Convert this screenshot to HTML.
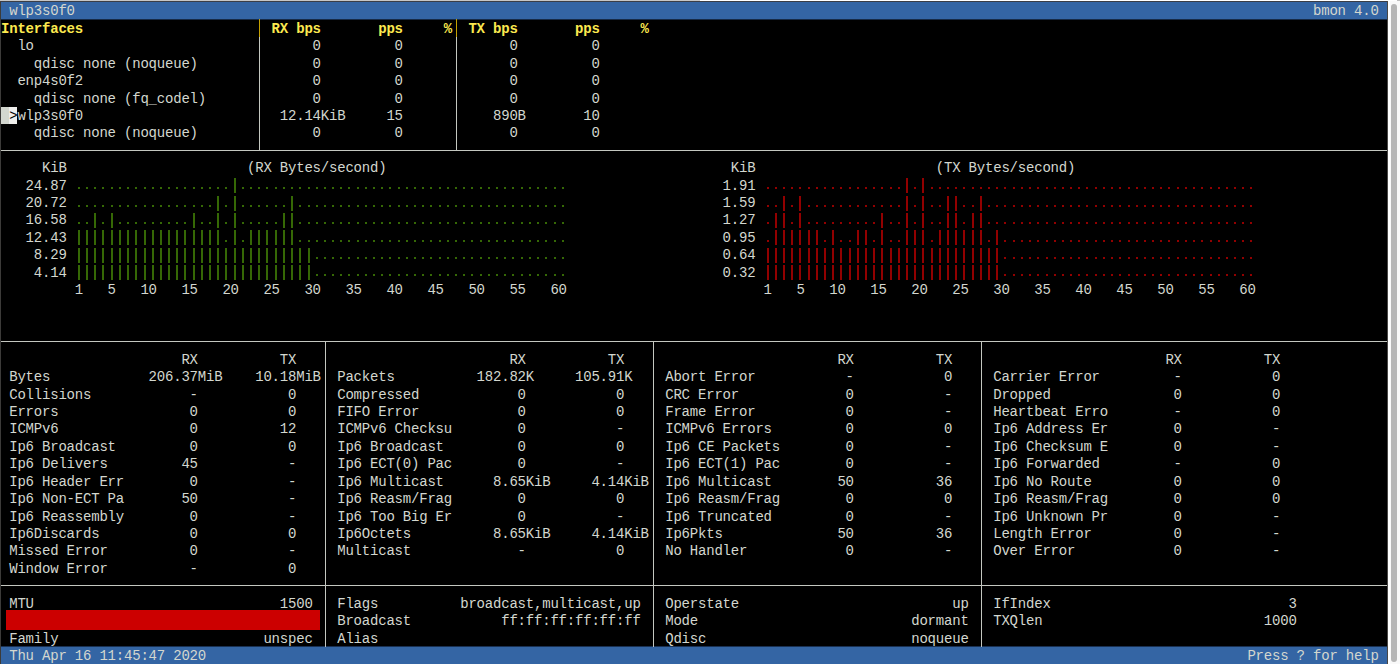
<!DOCTYPE html>
<html><head><meta charset="utf-8"><title>bmon</title>
<style>
html,body{margin:0;padding:0;}
body{width:1400px;height:664px;overflow:hidden;position:relative;background:#f9f9f9;}
#term{position:absolute;left:0;top:1px;width:1388px;height:663px;background:#000;}
#lb{position:absolute;left:0;top:1px;width:1px;height:663px;background:#3c3b39;}
#tb{position:absolute;left:0;top:1px;width:1388px;height:1px;background:#3b3e46;}
#rb{position:absolute;left:1387px;top:1px;width:1px;height:663px;background:#4a4846;}
#t0{position:absolute;left:0;top:0;width:700px;height:1px;background:#c6c6c6;}
#t1{position:absolute;left:700px;top:0;width:700px;height:1px;background:#ffffff;}
#st{position:absolute;left:1388px;top:0;width:2px;height:664px;background:#ffffff;}
#cr{position:absolute;left:1397px;top:0;width:3px;height:1px;background:#bdbdbd;}
#sb{position:absolute;left:1391px;top:4px;width:6px;height:658px;border-radius:3px;background:#b6b6b6;}
span{position:absolute;white-space:pre;font-family:"Liberation Mono",monospace;font-size:14.0px;line-height:17.42px;letter-spacing:-0.201px;color:#d3d7cf;}
i{position:absolute;display:block;}
</style></head><body>
<div id="term"></div><div id="lb"></div><div id="tb"></div><div id="rb"></div><div id="t0"></div><div id="t1"></div><div id="st"></div><div id="sb"></div><div id="cr"></div>
<i style="left:1.00px;top:2.00px;width:1386.00px;height:17.00px;background:#3465a4;"></i>
<i style="left:1.00px;top:19.00px;width:1386.00px;height:1.00px;background:#172b47;"></i>
<i style="left:1.00px;top:647.00px;width:1386.00px;height:17.00px;background:#3465a4;"></i>
<i style="left:1.00px;top:646.00px;width:1386.00px;height:1.00px;background:#1a3152;"></i>
<i style="left:259.00px;top:19.42px;width:1.00px;height:17.42px;background:#c4a000;"></i>
<i style="left:259.00px;top:36.84px;width:1.00px;height:113.23px;background:#c4c7c0;"></i>
<i style="left:456.00px;top:19.42px;width:1.00px;height:17.42px;background:#c4a000;"></i>
<i style="left:456.00px;top:36.84px;width:1.00px;height:113.23px;background:#c4c7c0;"></i>
<i style="left:1.00px;top:106.52px;width:8.20px;height:17.42px;background:#d3d7cf;"></i>
<i style="left:9.20px;top:106.52px;width:8.20px;height:17.42px;background:#eeeeec;"></i>
<i style="left:1.00px;top:150.00px;width:1385.80px;height:1.00px;background:#c4c7c0;"></i>
<i style="left:78.00px;top:187.00px;width:2.00px;height:2.00px;background:#356805;"></i>
<i style="left:86.00px;top:187.00px;width:2.00px;height:2.00px;background:#356805;"></i>
<i style="left:94.00px;top:187.00px;width:2.00px;height:2.00px;background:#356805;"></i>
<i style="left:102.00px;top:187.00px;width:2.00px;height:2.00px;background:#356805;"></i>
<i style="left:111.00px;top:187.00px;width:2.00px;height:2.00px;background:#356805;"></i>
<i style="left:119.00px;top:187.00px;width:2.00px;height:2.00px;background:#356805;"></i>
<i style="left:127.00px;top:187.00px;width:2.00px;height:2.00px;background:#356805;"></i>
<i style="left:135.00px;top:187.00px;width:2.00px;height:2.00px;background:#356805;"></i>
<i style="left:144.00px;top:187.00px;width:2.00px;height:2.00px;background:#356805;"></i>
<i style="left:152.00px;top:187.00px;width:2.00px;height:2.00px;background:#356805;"></i>
<i style="left:160.00px;top:187.00px;width:2.00px;height:2.00px;background:#356805;"></i>
<i style="left:168.00px;top:187.00px;width:2.00px;height:2.00px;background:#356805;"></i>
<i style="left:176.00px;top:187.00px;width:2.00px;height:2.00px;background:#356805;"></i>
<i style="left:184.00px;top:187.00px;width:2.00px;height:2.00px;background:#356805;"></i>
<i style="left:193.00px;top:187.00px;width:2.00px;height:2.00px;background:#356805;"></i>
<i style="left:201.00px;top:187.00px;width:2.00px;height:2.00px;background:#356805;"></i>
<i style="left:209.00px;top:187.00px;width:2.00px;height:2.00px;background:#356805;"></i>
<i style="left:217.00px;top:187.00px;width:2.00px;height:2.00px;background:#356805;"></i>
<i style="left:225.00px;top:187.00px;width:2.00px;height:2.00px;background:#356805;"></i>
<i style="left:234.00px;top:178.00px;width:2.00px;height:15.00px;background:#356805;"></i>
<i style="left:242.00px;top:187.00px;width:2.00px;height:2.00px;background:#356805;"></i>
<i style="left:250.00px;top:187.00px;width:2.00px;height:2.00px;background:#356805;"></i>
<i style="left:258.00px;top:187.00px;width:2.00px;height:2.00px;background:#356805;"></i>
<i style="left:266.00px;top:187.00px;width:2.00px;height:2.00px;background:#356805;"></i>
<i style="left:275.00px;top:187.00px;width:2.00px;height:2.00px;background:#356805;"></i>
<i style="left:283.00px;top:187.00px;width:2.00px;height:2.00px;background:#356805;"></i>
<i style="left:291.00px;top:187.00px;width:2.00px;height:2.00px;background:#356805;"></i>
<i style="left:299.00px;top:187.00px;width:2.00px;height:2.00px;background:#356805;"></i>
<i style="left:308.00px;top:187.00px;width:2.00px;height:2.00px;background:#356805;"></i>
<i style="left:316.00px;top:187.00px;width:2.00px;height:2.00px;background:#356805;"></i>
<i style="left:324.00px;top:187.00px;width:2.00px;height:2.00px;background:#356805;"></i>
<i style="left:332.00px;top:187.00px;width:2.00px;height:2.00px;background:#356805;"></i>
<i style="left:340.00px;top:187.00px;width:2.00px;height:2.00px;background:#356805;"></i>
<i style="left:348.00px;top:187.00px;width:2.00px;height:2.00px;background:#356805;"></i>
<i style="left:357.00px;top:187.00px;width:2.00px;height:2.00px;background:#356805;"></i>
<i style="left:365.00px;top:187.00px;width:2.00px;height:2.00px;background:#356805;"></i>
<i style="left:373.00px;top:187.00px;width:2.00px;height:2.00px;background:#356805;"></i>
<i style="left:381.00px;top:187.00px;width:2.00px;height:2.00px;background:#356805;"></i>
<i style="left:389.00px;top:187.00px;width:2.00px;height:2.00px;background:#356805;"></i>
<i style="left:398.00px;top:187.00px;width:2.00px;height:2.00px;background:#356805;"></i>
<i style="left:406.00px;top:187.00px;width:2.00px;height:2.00px;background:#356805;"></i>
<i style="left:414.00px;top:187.00px;width:2.00px;height:2.00px;background:#356805;"></i>
<i style="left:422.00px;top:187.00px;width:2.00px;height:2.00px;background:#356805;"></i>
<i style="left:430.00px;top:187.00px;width:2.00px;height:2.00px;background:#356805;"></i>
<i style="left:439.00px;top:187.00px;width:2.00px;height:2.00px;background:#356805;"></i>
<i style="left:447.00px;top:187.00px;width:2.00px;height:2.00px;background:#356805;"></i>
<i style="left:455.00px;top:187.00px;width:2.00px;height:2.00px;background:#356805;"></i>
<i style="left:463.00px;top:187.00px;width:2.00px;height:2.00px;background:#356805;"></i>
<i style="left:471.00px;top:187.00px;width:2.00px;height:2.00px;background:#356805;"></i>
<i style="left:480.00px;top:187.00px;width:2.00px;height:2.00px;background:#356805;"></i>
<i style="left:488.00px;top:187.00px;width:2.00px;height:2.00px;background:#356805;"></i>
<i style="left:496.00px;top:187.00px;width:2.00px;height:2.00px;background:#356805;"></i>
<i style="left:504.00px;top:187.00px;width:2.00px;height:2.00px;background:#356805;"></i>
<i style="left:512.00px;top:187.00px;width:2.00px;height:2.00px;background:#356805;"></i>
<i style="left:521.00px;top:187.00px;width:2.00px;height:2.00px;background:#356805;"></i>
<i style="left:529.00px;top:187.00px;width:2.00px;height:2.00px;background:#356805;"></i>
<i style="left:537.00px;top:187.00px;width:2.00px;height:2.00px;background:#356805;"></i>
<i style="left:545.00px;top:187.00px;width:2.00px;height:2.00px;background:#356805;"></i>
<i style="left:554.00px;top:187.00px;width:2.00px;height:2.00px;background:#356805;"></i>
<i style="left:562.00px;top:187.00px;width:2.00px;height:2.00px;background:#356805;"></i>
<i style="left:78.00px;top:205.00px;width:2.00px;height:2.00px;background:#356805;"></i>
<i style="left:86.00px;top:205.00px;width:2.00px;height:2.00px;background:#356805;"></i>
<i style="left:94.00px;top:205.00px;width:2.00px;height:2.00px;background:#356805;"></i>
<i style="left:102.00px;top:205.00px;width:2.00px;height:2.00px;background:#356805;"></i>
<i style="left:111.00px;top:205.00px;width:2.00px;height:2.00px;background:#356805;"></i>
<i style="left:119.00px;top:205.00px;width:2.00px;height:2.00px;background:#356805;"></i>
<i style="left:127.00px;top:205.00px;width:2.00px;height:2.00px;background:#356805;"></i>
<i style="left:135.00px;top:205.00px;width:2.00px;height:2.00px;background:#356805;"></i>
<i style="left:144.00px;top:205.00px;width:2.00px;height:2.00px;background:#356805;"></i>
<i style="left:152.00px;top:205.00px;width:2.00px;height:2.00px;background:#356805;"></i>
<i style="left:160.00px;top:205.00px;width:2.00px;height:2.00px;background:#356805;"></i>
<i style="left:168.00px;top:205.00px;width:2.00px;height:2.00px;background:#356805;"></i>
<i style="left:176.00px;top:205.00px;width:2.00px;height:2.00px;background:#356805;"></i>
<i style="left:184.00px;top:205.00px;width:2.00px;height:2.00px;background:#356805;"></i>
<i style="left:193.00px;top:205.00px;width:2.00px;height:2.00px;background:#356805;"></i>
<i style="left:201.00px;top:205.00px;width:2.00px;height:2.00px;background:#356805;"></i>
<i style="left:209.00px;top:205.00px;width:2.00px;height:2.00px;background:#356805;"></i>
<i style="left:217.00px;top:196.00px;width:2.00px;height:15.00px;background:#356805;"></i>
<i style="left:225.00px;top:205.00px;width:2.00px;height:2.00px;background:#356805;"></i>
<i style="left:234.00px;top:196.00px;width:2.00px;height:15.00px;background:#356805;"></i>
<i style="left:242.00px;top:205.00px;width:2.00px;height:2.00px;background:#356805;"></i>
<i style="left:250.00px;top:205.00px;width:2.00px;height:2.00px;background:#356805;"></i>
<i style="left:258.00px;top:205.00px;width:2.00px;height:2.00px;background:#356805;"></i>
<i style="left:266.00px;top:205.00px;width:2.00px;height:2.00px;background:#356805;"></i>
<i style="left:275.00px;top:205.00px;width:2.00px;height:2.00px;background:#356805;"></i>
<i style="left:283.00px;top:205.00px;width:2.00px;height:2.00px;background:#356805;"></i>
<i style="left:291.00px;top:196.00px;width:2.00px;height:15.00px;background:#356805;"></i>
<i style="left:299.00px;top:205.00px;width:2.00px;height:2.00px;background:#356805;"></i>
<i style="left:308.00px;top:205.00px;width:2.00px;height:2.00px;background:#356805;"></i>
<i style="left:316.00px;top:205.00px;width:2.00px;height:2.00px;background:#356805;"></i>
<i style="left:324.00px;top:205.00px;width:2.00px;height:2.00px;background:#356805;"></i>
<i style="left:332.00px;top:205.00px;width:2.00px;height:2.00px;background:#356805;"></i>
<i style="left:340.00px;top:205.00px;width:2.00px;height:2.00px;background:#356805;"></i>
<i style="left:348.00px;top:205.00px;width:2.00px;height:2.00px;background:#356805;"></i>
<i style="left:357.00px;top:205.00px;width:2.00px;height:2.00px;background:#356805;"></i>
<i style="left:365.00px;top:205.00px;width:2.00px;height:2.00px;background:#356805;"></i>
<i style="left:373.00px;top:205.00px;width:2.00px;height:2.00px;background:#356805;"></i>
<i style="left:381.00px;top:205.00px;width:2.00px;height:2.00px;background:#356805;"></i>
<i style="left:389.00px;top:205.00px;width:2.00px;height:2.00px;background:#356805;"></i>
<i style="left:398.00px;top:205.00px;width:2.00px;height:2.00px;background:#356805;"></i>
<i style="left:406.00px;top:205.00px;width:2.00px;height:2.00px;background:#356805;"></i>
<i style="left:414.00px;top:205.00px;width:2.00px;height:2.00px;background:#356805;"></i>
<i style="left:422.00px;top:205.00px;width:2.00px;height:2.00px;background:#356805;"></i>
<i style="left:430.00px;top:205.00px;width:2.00px;height:2.00px;background:#356805;"></i>
<i style="left:439.00px;top:205.00px;width:2.00px;height:2.00px;background:#356805;"></i>
<i style="left:447.00px;top:205.00px;width:2.00px;height:2.00px;background:#356805;"></i>
<i style="left:455.00px;top:205.00px;width:2.00px;height:2.00px;background:#356805;"></i>
<i style="left:463.00px;top:205.00px;width:2.00px;height:2.00px;background:#356805;"></i>
<i style="left:471.00px;top:205.00px;width:2.00px;height:2.00px;background:#356805;"></i>
<i style="left:480.00px;top:205.00px;width:2.00px;height:2.00px;background:#356805;"></i>
<i style="left:488.00px;top:205.00px;width:2.00px;height:2.00px;background:#356805;"></i>
<i style="left:496.00px;top:205.00px;width:2.00px;height:2.00px;background:#356805;"></i>
<i style="left:504.00px;top:205.00px;width:2.00px;height:2.00px;background:#356805;"></i>
<i style="left:512.00px;top:205.00px;width:2.00px;height:2.00px;background:#356805;"></i>
<i style="left:521.00px;top:205.00px;width:2.00px;height:2.00px;background:#356805;"></i>
<i style="left:529.00px;top:205.00px;width:2.00px;height:2.00px;background:#356805;"></i>
<i style="left:537.00px;top:205.00px;width:2.00px;height:2.00px;background:#356805;"></i>
<i style="left:545.00px;top:205.00px;width:2.00px;height:2.00px;background:#356805;"></i>
<i style="left:554.00px;top:205.00px;width:2.00px;height:2.00px;background:#356805;"></i>
<i style="left:562.00px;top:205.00px;width:2.00px;height:2.00px;background:#356805;"></i>
<i style="left:78.00px;top:222.00px;width:2.00px;height:2.00px;background:#356805;"></i>
<i style="left:86.00px;top:222.00px;width:2.00px;height:2.00px;background:#356805;"></i>
<i style="left:94.00px;top:213.00px;width:2.00px;height:15.00px;background:#356805;"></i>
<i style="left:102.00px;top:222.00px;width:2.00px;height:2.00px;background:#356805;"></i>
<i style="left:111.00px;top:213.00px;width:2.00px;height:15.00px;background:#356805;"></i>
<i style="left:119.00px;top:222.00px;width:2.00px;height:2.00px;background:#356805;"></i>
<i style="left:127.00px;top:222.00px;width:2.00px;height:2.00px;background:#356805;"></i>
<i style="left:135.00px;top:222.00px;width:2.00px;height:2.00px;background:#356805;"></i>
<i style="left:144.00px;top:222.00px;width:2.00px;height:2.00px;background:#356805;"></i>
<i style="left:152.00px;top:222.00px;width:2.00px;height:2.00px;background:#356805;"></i>
<i style="left:160.00px;top:222.00px;width:2.00px;height:2.00px;background:#356805;"></i>
<i style="left:168.00px;top:222.00px;width:2.00px;height:2.00px;background:#356805;"></i>
<i style="left:176.00px;top:222.00px;width:2.00px;height:2.00px;background:#356805;"></i>
<i style="left:184.00px;top:222.00px;width:2.00px;height:2.00px;background:#356805;"></i>
<i style="left:193.00px;top:213.00px;width:2.00px;height:15.00px;background:#356805;"></i>
<i style="left:201.00px;top:222.00px;width:2.00px;height:2.00px;background:#356805;"></i>
<i style="left:209.00px;top:222.00px;width:2.00px;height:2.00px;background:#356805;"></i>
<i style="left:217.00px;top:213.00px;width:2.00px;height:15.00px;background:#356805;"></i>
<i style="left:225.00px;top:222.00px;width:2.00px;height:2.00px;background:#356805;"></i>
<i style="left:234.00px;top:213.00px;width:2.00px;height:15.00px;background:#356805;"></i>
<i style="left:242.00px;top:222.00px;width:2.00px;height:2.00px;background:#356805;"></i>
<i style="left:250.00px;top:222.00px;width:2.00px;height:2.00px;background:#356805;"></i>
<i style="left:258.00px;top:222.00px;width:2.00px;height:2.00px;background:#356805;"></i>
<i style="left:266.00px;top:222.00px;width:2.00px;height:2.00px;background:#356805;"></i>
<i style="left:275.00px;top:222.00px;width:2.00px;height:2.00px;background:#356805;"></i>
<i style="left:283.00px;top:213.00px;width:2.00px;height:15.00px;background:#356805;"></i>
<i style="left:291.00px;top:213.00px;width:2.00px;height:15.00px;background:#356805;"></i>
<i style="left:299.00px;top:222.00px;width:2.00px;height:2.00px;background:#356805;"></i>
<i style="left:308.00px;top:222.00px;width:2.00px;height:2.00px;background:#356805;"></i>
<i style="left:316.00px;top:222.00px;width:2.00px;height:2.00px;background:#356805;"></i>
<i style="left:324.00px;top:222.00px;width:2.00px;height:2.00px;background:#356805;"></i>
<i style="left:332.00px;top:222.00px;width:2.00px;height:2.00px;background:#356805;"></i>
<i style="left:340.00px;top:222.00px;width:2.00px;height:2.00px;background:#356805;"></i>
<i style="left:348.00px;top:222.00px;width:2.00px;height:2.00px;background:#356805;"></i>
<i style="left:357.00px;top:222.00px;width:2.00px;height:2.00px;background:#356805;"></i>
<i style="left:365.00px;top:222.00px;width:2.00px;height:2.00px;background:#356805;"></i>
<i style="left:373.00px;top:222.00px;width:2.00px;height:2.00px;background:#356805;"></i>
<i style="left:381.00px;top:222.00px;width:2.00px;height:2.00px;background:#356805;"></i>
<i style="left:389.00px;top:222.00px;width:2.00px;height:2.00px;background:#356805;"></i>
<i style="left:398.00px;top:222.00px;width:2.00px;height:2.00px;background:#356805;"></i>
<i style="left:406.00px;top:222.00px;width:2.00px;height:2.00px;background:#356805;"></i>
<i style="left:414.00px;top:222.00px;width:2.00px;height:2.00px;background:#356805;"></i>
<i style="left:422.00px;top:222.00px;width:2.00px;height:2.00px;background:#356805;"></i>
<i style="left:430.00px;top:222.00px;width:2.00px;height:2.00px;background:#356805;"></i>
<i style="left:439.00px;top:222.00px;width:2.00px;height:2.00px;background:#356805;"></i>
<i style="left:447.00px;top:222.00px;width:2.00px;height:2.00px;background:#356805;"></i>
<i style="left:455.00px;top:222.00px;width:2.00px;height:2.00px;background:#356805;"></i>
<i style="left:463.00px;top:222.00px;width:2.00px;height:2.00px;background:#356805;"></i>
<i style="left:471.00px;top:222.00px;width:2.00px;height:2.00px;background:#356805;"></i>
<i style="left:480.00px;top:222.00px;width:2.00px;height:2.00px;background:#356805;"></i>
<i style="left:488.00px;top:222.00px;width:2.00px;height:2.00px;background:#356805;"></i>
<i style="left:496.00px;top:222.00px;width:2.00px;height:2.00px;background:#356805;"></i>
<i style="left:504.00px;top:222.00px;width:2.00px;height:2.00px;background:#356805;"></i>
<i style="left:512.00px;top:222.00px;width:2.00px;height:2.00px;background:#356805;"></i>
<i style="left:521.00px;top:222.00px;width:2.00px;height:2.00px;background:#356805;"></i>
<i style="left:529.00px;top:222.00px;width:2.00px;height:2.00px;background:#356805;"></i>
<i style="left:537.00px;top:222.00px;width:2.00px;height:2.00px;background:#356805;"></i>
<i style="left:545.00px;top:222.00px;width:2.00px;height:2.00px;background:#356805;"></i>
<i style="left:554.00px;top:222.00px;width:2.00px;height:2.00px;background:#356805;"></i>
<i style="left:562.00px;top:222.00px;width:2.00px;height:2.00px;background:#356805;"></i>
<i style="left:78.00px;top:230.00px;width:2.00px;height:15.00px;background:#356805;"></i>
<i style="left:86.00px;top:230.00px;width:2.00px;height:15.00px;background:#356805;"></i>
<i style="left:94.00px;top:230.00px;width:2.00px;height:15.00px;background:#356805;"></i>
<i style="left:102.00px;top:230.00px;width:2.00px;height:15.00px;background:#356805;"></i>
<i style="left:111.00px;top:230.00px;width:2.00px;height:15.00px;background:#356805;"></i>
<i style="left:119.00px;top:230.00px;width:2.00px;height:15.00px;background:#356805;"></i>
<i style="left:127.00px;top:230.00px;width:2.00px;height:15.00px;background:#356805;"></i>
<i style="left:135.00px;top:230.00px;width:2.00px;height:15.00px;background:#356805;"></i>
<i style="left:144.00px;top:230.00px;width:2.00px;height:15.00px;background:#356805;"></i>
<i style="left:152.00px;top:230.00px;width:2.00px;height:15.00px;background:#356805;"></i>
<i style="left:160.00px;top:230.00px;width:2.00px;height:15.00px;background:#356805;"></i>
<i style="left:168.00px;top:230.00px;width:2.00px;height:15.00px;background:#356805;"></i>
<i style="left:176.00px;top:230.00px;width:2.00px;height:15.00px;background:#356805;"></i>
<i style="left:184.00px;top:230.00px;width:2.00px;height:15.00px;background:#356805;"></i>
<i style="left:193.00px;top:230.00px;width:2.00px;height:15.00px;background:#356805;"></i>
<i style="left:201.00px;top:230.00px;width:2.00px;height:15.00px;background:#356805;"></i>
<i style="left:209.00px;top:230.00px;width:2.00px;height:15.00px;background:#356805;"></i>
<i style="left:217.00px;top:230.00px;width:2.00px;height:15.00px;background:#356805;"></i>
<i style="left:225.00px;top:240.00px;width:2.00px;height:2.00px;background:#356805;"></i>
<i style="left:234.00px;top:230.00px;width:2.00px;height:15.00px;background:#356805;"></i>
<i style="left:242.00px;top:240.00px;width:2.00px;height:2.00px;background:#356805;"></i>
<i style="left:250.00px;top:230.00px;width:2.00px;height:15.00px;background:#356805;"></i>
<i style="left:258.00px;top:230.00px;width:2.00px;height:15.00px;background:#356805;"></i>
<i style="left:266.00px;top:230.00px;width:2.00px;height:15.00px;background:#356805;"></i>
<i style="left:275.00px;top:230.00px;width:2.00px;height:15.00px;background:#356805;"></i>
<i style="left:283.00px;top:230.00px;width:2.00px;height:15.00px;background:#356805;"></i>
<i style="left:291.00px;top:230.00px;width:2.00px;height:15.00px;background:#356805;"></i>
<i style="left:299.00px;top:240.00px;width:2.00px;height:2.00px;background:#356805;"></i>
<i style="left:308.00px;top:240.00px;width:2.00px;height:2.00px;background:#356805;"></i>
<i style="left:316.00px;top:240.00px;width:2.00px;height:2.00px;background:#356805;"></i>
<i style="left:324.00px;top:240.00px;width:2.00px;height:2.00px;background:#356805;"></i>
<i style="left:332.00px;top:240.00px;width:2.00px;height:2.00px;background:#356805;"></i>
<i style="left:340.00px;top:240.00px;width:2.00px;height:2.00px;background:#356805;"></i>
<i style="left:348.00px;top:240.00px;width:2.00px;height:2.00px;background:#356805;"></i>
<i style="left:357.00px;top:240.00px;width:2.00px;height:2.00px;background:#356805;"></i>
<i style="left:365.00px;top:240.00px;width:2.00px;height:2.00px;background:#356805;"></i>
<i style="left:373.00px;top:240.00px;width:2.00px;height:2.00px;background:#356805;"></i>
<i style="left:381.00px;top:240.00px;width:2.00px;height:2.00px;background:#356805;"></i>
<i style="left:389.00px;top:240.00px;width:2.00px;height:2.00px;background:#356805;"></i>
<i style="left:398.00px;top:240.00px;width:2.00px;height:2.00px;background:#356805;"></i>
<i style="left:406.00px;top:240.00px;width:2.00px;height:2.00px;background:#356805;"></i>
<i style="left:414.00px;top:240.00px;width:2.00px;height:2.00px;background:#356805;"></i>
<i style="left:422.00px;top:240.00px;width:2.00px;height:2.00px;background:#356805;"></i>
<i style="left:430.00px;top:240.00px;width:2.00px;height:2.00px;background:#356805;"></i>
<i style="left:439.00px;top:240.00px;width:2.00px;height:2.00px;background:#356805;"></i>
<i style="left:447.00px;top:240.00px;width:2.00px;height:2.00px;background:#356805;"></i>
<i style="left:455.00px;top:240.00px;width:2.00px;height:2.00px;background:#356805;"></i>
<i style="left:463.00px;top:240.00px;width:2.00px;height:2.00px;background:#356805;"></i>
<i style="left:471.00px;top:240.00px;width:2.00px;height:2.00px;background:#356805;"></i>
<i style="left:480.00px;top:240.00px;width:2.00px;height:2.00px;background:#356805;"></i>
<i style="left:488.00px;top:240.00px;width:2.00px;height:2.00px;background:#356805;"></i>
<i style="left:496.00px;top:240.00px;width:2.00px;height:2.00px;background:#356805;"></i>
<i style="left:504.00px;top:240.00px;width:2.00px;height:2.00px;background:#356805;"></i>
<i style="left:512.00px;top:240.00px;width:2.00px;height:2.00px;background:#356805;"></i>
<i style="left:521.00px;top:240.00px;width:2.00px;height:2.00px;background:#356805;"></i>
<i style="left:529.00px;top:240.00px;width:2.00px;height:2.00px;background:#356805;"></i>
<i style="left:537.00px;top:240.00px;width:2.00px;height:2.00px;background:#356805;"></i>
<i style="left:545.00px;top:240.00px;width:2.00px;height:2.00px;background:#356805;"></i>
<i style="left:554.00px;top:240.00px;width:2.00px;height:2.00px;background:#356805;"></i>
<i style="left:562.00px;top:240.00px;width:2.00px;height:2.00px;background:#356805;"></i>
<i style="left:78.00px;top:248.00px;width:2.00px;height:15.00px;background:#356805;"></i>
<i style="left:86.00px;top:248.00px;width:2.00px;height:15.00px;background:#356805;"></i>
<i style="left:94.00px;top:248.00px;width:2.00px;height:15.00px;background:#356805;"></i>
<i style="left:102.00px;top:248.00px;width:2.00px;height:15.00px;background:#356805;"></i>
<i style="left:111.00px;top:248.00px;width:2.00px;height:15.00px;background:#356805;"></i>
<i style="left:119.00px;top:248.00px;width:2.00px;height:15.00px;background:#356805;"></i>
<i style="left:127.00px;top:248.00px;width:2.00px;height:15.00px;background:#356805;"></i>
<i style="left:135.00px;top:248.00px;width:2.00px;height:15.00px;background:#356805;"></i>
<i style="left:144.00px;top:248.00px;width:2.00px;height:15.00px;background:#356805;"></i>
<i style="left:152.00px;top:248.00px;width:2.00px;height:15.00px;background:#356805;"></i>
<i style="left:160.00px;top:248.00px;width:2.00px;height:15.00px;background:#356805;"></i>
<i style="left:168.00px;top:248.00px;width:2.00px;height:15.00px;background:#356805;"></i>
<i style="left:176.00px;top:248.00px;width:2.00px;height:15.00px;background:#356805;"></i>
<i style="left:184.00px;top:248.00px;width:2.00px;height:15.00px;background:#356805;"></i>
<i style="left:193.00px;top:248.00px;width:2.00px;height:15.00px;background:#356805;"></i>
<i style="left:201.00px;top:248.00px;width:2.00px;height:15.00px;background:#356805;"></i>
<i style="left:209.00px;top:248.00px;width:2.00px;height:15.00px;background:#356805;"></i>
<i style="left:217.00px;top:248.00px;width:2.00px;height:15.00px;background:#356805;"></i>
<i style="left:225.00px;top:248.00px;width:2.00px;height:15.00px;background:#356805;"></i>
<i style="left:234.00px;top:248.00px;width:2.00px;height:15.00px;background:#356805;"></i>
<i style="left:242.00px;top:248.00px;width:2.00px;height:15.00px;background:#356805;"></i>
<i style="left:250.00px;top:248.00px;width:2.00px;height:15.00px;background:#356805;"></i>
<i style="left:258.00px;top:248.00px;width:2.00px;height:15.00px;background:#356805;"></i>
<i style="left:266.00px;top:248.00px;width:2.00px;height:15.00px;background:#356805;"></i>
<i style="left:275.00px;top:248.00px;width:2.00px;height:15.00px;background:#356805;"></i>
<i style="left:283.00px;top:248.00px;width:2.00px;height:15.00px;background:#356805;"></i>
<i style="left:291.00px;top:248.00px;width:2.00px;height:15.00px;background:#356805;"></i>
<i style="left:299.00px;top:248.00px;width:2.00px;height:15.00px;background:#356805;"></i>
<i style="left:308.00px;top:248.00px;width:2.00px;height:15.00px;background:#356805;"></i>
<i style="left:316.00px;top:257.00px;width:2.00px;height:2.00px;background:#356805;"></i>
<i style="left:324.00px;top:257.00px;width:2.00px;height:2.00px;background:#356805;"></i>
<i style="left:332.00px;top:257.00px;width:2.00px;height:2.00px;background:#356805;"></i>
<i style="left:340.00px;top:257.00px;width:2.00px;height:2.00px;background:#356805;"></i>
<i style="left:348.00px;top:257.00px;width:2.00px;height:2.00px;background:#356805;"></i>
<i style="left:357.00px;top:257.00px;width:2.00px;height:2.00px;background:#356805;"></i>
<i style="left:365.00px;top:257.00px;width:2.00px;height:2.00px;background:#356805;"></i>
<i style="left:373.00px;top:257.00px;width:2.00px;height:2.00px;background:#356805;"></i>
<i style="left:381.00px;top:257.00px;width:2.00px;height:2.00px;background:#356805;"></i>
<i style="left:389.00px;top:257.00px;width:2.00px;height:2.00px;background:#356805;"></i>
<i style="left:398.00px;top:257.00px;width:2.00px;height:2.00px;background:#356805;"></i>
<i style="left:406.00px;top:257.00px;width:2.00px;height:2.00px;background:#356805;"></i>
<i style="left:414.00px;top:257.00px;width:2.00px;height:2.00px;background:#356805;"></i>
<i style="left:422.00px;top:257.00px;width:2.00px;height:2.00px;background:#356805;"></i>
<i style="left:430.00px;top:257.00px;width:2.00px;height:2.00px;background:#356805;"></i>
<i style="left:439.00px;top:257.00px;width:2.00px;height:2.00px;background:#356805;"></i>
<i style="left:447.00px;top:257.00px;width:2.00px;height:2.00px;background:#356805;"></i>
<i style="left:455.00px;top:257.00px;width:2.00px;height:2.00px;background:#356805;"></i>
<i style="left:463.00px;top:257.00px;width:2.00px;height:2.00px;background:#356805;"></i>
<i style="left:471.00px;top:257.00px;width:2.00px;height:2.00px;background:#356805;"></i>
<i style="left:480.00px;top:257.00px;width:2.00px;height:2.00px;background:#356805;"></i>
<i style="left:488.00px;top:257.00px;width:2.00px;height:2.00px;background:#356805;"></i>
<i style="left:496.00px;top:257.00px;width:2.00px;height:2.00px;background:#356805;"></i>
<i style="left:504.00px;top:257.00px;width:2.00px;height:2.00px;background:#356805;"></i>
<i style="left:512.00px;top:257.00px;width:2.00px;height:2.00px;background:#356805;"></i>
<i style="left:521.00px;top:257.00px;width:2.00px;height:2.00px;background:#356805;"></i>
<i style="left:529.00px;top:257.00px;width:2.00px;height:2.00px;background:#356805;"></i>
<i style="left:537.00px;top:257.00px;width:2.00px;height:2.00px;background:#356805;"></i>
<i style="left:545.00px;top:257.00px;width:2.00px;height:2.00px;background:#356805;"></i>
<i style="left:554.00px;top:257.00px;width:2.00px;height:2.00px;background:#356805;"></i>
<i style="left:562.00px;top:257.00px;width:2.00px;height:2.00px;background:#356805;"></i>
<i style="left:78.00px;top:265.00px;width:2.00px;height:15.00px;background:#356805;"></i>
<i style="left:86.00px;top:265.00px;width:2.00px;height:15.00px;background:#356805;"></i>
<i style="left:94.00px;top:265.00px;width:2.00px;height:15.00px;background:#356805;"></i>
<i style="left:102.00px;top:265.00px;width:2.00px;height:15.00px;background:#356805;"></i>
<i style="left:111.00px;top:265.00px;width:2.00px;height:15.00px;background:#356805;"></i>
<i style="left:119.00px;top:265.00px;width:2.00px;height:15.00px;background:#356805;"></i>
<i style="left:127.00px;top:265.00px;width:2.00px;height:15.00px;background:#356805;"></i>
<i style="left:135.00px;top:265.00px;width:2.00px;height:15.00px;background:#356805;"></i>
<i style="left:144.00px;top:265.00px;width:2.00px;height:15.00px;background:#356805;"></i>
<i style="left:152.00px;top:265.00px;width:2.00px;height:15.00px;background:#356805;"></i>
<i style="left:160.00px;top:265.00px;width:2.00px;height:15.00px;background:#356805;"></i>
<i style="left:168.00px;top:265.00px;width:2.00px;height:15.00px;background:#356805;"></i>
<i style="left:176.00px;top:265.00px;width:2.00px;height:15.00px;background:#356805;"></i>
<i style="left:184.00px;top:265.00px;width:2.00px;height:15.00px;background:#356805;"></i>
<i style="left:193.00px;top:265.00px;width:2.00px;height:15.00px;background:#356805;"></i>
<i style="left:201.00px;top:265.00px;width:2.00px;height:15.00px;background:#356805;"></i>
<i style="left:209.00px;top:265.00px;width:2.00px;height:15.00px;background:#356805;"></i>
<i style="left:217.00px;top:265.00px;width:2.00px;height:15.00px;background:#356805;"></i>
<i style="left:225.00px;top:265.00px;width:2.00px;height:15.00px;background:#356805;"></i>
<i style="left:234.00px;top:265.00px;width:2.00px;height:15.00px;background:#356805;"></i>
<i style="left:242.00px;top:265.00px;width:2.00px;height:15.00px;background:#356805;"></i>
<i style="left:250.00px;top:265.00px;width:2.00px;height:15.00px;background:#356805;"></i>
<i style="left:258.00px;top:265.00px;width:2.00px;height:15.00px;background:#356805;"></i>
<i style="left:266.00px;top:265.00px;width:2.00px;height:15.00px;background:#356805;"></i>
<i style="left:275.00px;top:265.00px;width:2.00px;height:15.00px;background:#356805;"></i>
<i style="left:283.00px;top:265.00px;width:2.00px;height:15.00px;background:#356805;"></i>
<i style="left:291.00px;top:265.00px;width:2.00px;height:15.00px;background:#356805;"></i>
<i style="left:299.00px;top:265.00px;width:2.00px;height:15.00px;background:#356805;"></i>
<i style="left:308.00px;top:265.00px;width:2.00px;height:15.00px;background:#356805;"></i>
<i style="left:316.00px;top:274.00px;width:2.00px;height:2.00px;background:#356805;"></i>
<i style="left:324.00px;top:274.00px;width:2.00px;height:2.00px;background:#356805;"></i>
<i style="left:332.00px;top:274.00px;width:2.00px;height:2.00px;background:#356805;"></i>
<i style="left:340.00px;top:274.00px;width:2.00px;height:2.00px;background:#356805;"></i>
<i style="left:348.00px;top:274.00px;width:2.00px;height:2.00px;background:#356805;"></i>
<i style="left:357.00px;top:274.00px;width:2.00px;height:2.00px;background:#356805;"></i>
<i style="left:365.00px;top:274.00px;width:2.00px;height:2.00px;background:#356805;"></i>
<i style="left:373.00px;top:274.00px;width:2.00px;height:2.00px;background:#356805;"></i>
<i style="left:381.00px;top:274.00px;width:2.00px;height:2.00px;background:#356805;"></i>
<i style="left:389.00px;top:274.00px;width:2.00px;height:2.00px;background:#356805;"></i>
<i style="left:398.00px;top:274.00px;width:2.00px;height:2.00px;background:#356805;"></i>
<i style="left:406.00px;top:274.00px;width:2.00px;height:2.00px;background:#356805;"></i>
<i style="left:414.00px;top:274.00px;width:2.00px;height:2.00px;background:#356805;"></i>
<i style="left:422.00px;top:274.00px;width:2.00px;height:2.00px;background:#356805;"></i>
<i style="left:430.00px;top:274.00px;width:2.00px;height:2.00px;background:#356805;"></i>
<i style="left:439.00px;top:274.00px;width:2.00px;height:2.00px;background:#356805;"></i>
<i style="left:447.00px;top:274.00px;width:2.00px;height:2.00px;background:#356805;"></i>
<i style="left:455.00px;top:274.00px;width:2.00px;height:2.00px;background:#356805;"></i>
<i style="left:463.00px;top:274.00px;width:2.00px;height:2.00px;background:#356805;"></i>
<i style="left:471.00px;top:274.00px;width:2.00px;height:2.00px;background:#356805;"></i>
<i style="left:480.00px;top:274.00px;width:2.00px;height:2.00px;background:#356805;"></i>
<i style="left:488.00px;top:274.00px;width:2.00px;height:2.00px;background:#356805;"></i>
<i style="left:496.00px;top:274.00px;width:2.00px;height:2.00px;background:#356805;"></i>
<i style="left:504.00px;top:274.00px;width:2.00px;height:2.00px;background:#356805;"></i>
<i style="left:512.00px;top:274.00px;width:2.00px;height:2.00px;background:#356805;"></i>
<i style="left:521.00px;top:274.00px;width:2.00px;height:2.00px;background:#356805;"></i>
<i style="left:529.00px;top:274.00px;width:2.00px;height:2.00px;background:#356805;"></i>
<i style="left:537.00px;top:274.00px;width:2.00px;height:2.00px;background:#356805;"></i>
<i style="left:545.00px;top:274.00px;width:2.00px;height:2.00px;background:#356805;"></i>
<i style="left:554.00px;top:274.00px;width:2.00px;height:2.00px;background:#356805;"></i>
<i style="left:562.00px;top:274.00px;width:2.00px;height:2.00px;background:#356805;"></i>
<i style="left:767.00px;top:187.00px;width:2.00px;height:2.00px;background:#920000;"></i>
<i style="left:775.00px;top:187.00px;width:2.00px;height:2.00px;background:#920000;"></i>
<i style="left:783.00px;top:187.00px;width:2.00px;height:2.00px;background:#920000;"></i>
<i style="left:791.00px;top:187.00px;width:2.00px;height:2.00px;background:#920000;"></i>
<i style="left:799.00px;top:187.00px;width:2.00px;height:2.00px;background:#920000;"></i>
<i style="left:808.00px;top:187.00px;width:2.00px;height:2.00px;background:#920000;"></i>
<i style="left:816.00px;top:187.00px;width:2.00px;height:2.00px;background:#920000;"></i>
<i style="left:824.00px;top:187.00px;width:2.00px;height:2.00px;background:#920000;"></i>
<i style="left:832.00px;top:187.00px;width:2.00px;height:2.00px;background:#920000;"></i>
<i style="left:840.00px;top:187.00px;width:2.00px;height:2.00px;background:#920000;"></i>
<i style="left:849.00px;top:187.00px;width:2.00px;height:2.00px;background:#920000;"></i>
<i style="left:857.00px;top:187.00px;width:2.00px;height:2.00px;background:#920000;"></i>
<i style="left:865.00px;top:187.00px;width:2.00px;height:2.00px;background:#920000;"></i>
<i style="left:873.00px;top:187.00px;width:2.00px;height:2.00px;background:#920000;"></i>
<i style="left:881.00px;top:187.00px;width:2.00px;height:2.00px;background:#920000;"></i>
<i style="left:890.00px;top:187.00px;width:2.00px;height:2.00px;background:#920000;"></i>
<i style="left:898.00px;top:187.00px;width:2.00px;height:2.00px;background:#920000;"></i>
<i style="left:906.00px;top:178.00px;width:2.00px;height:15.00px;background:#920000;"></i>
<i style="left:914.00px;top:187.00px;width:2.00px;height:2.00px;background:#920000;"></i>
<i style="left:922.00px;top:178.00px;width:2.00px;height:15.00px;background:#920000;"></i>
<i style="left:931.00px;top:187.00px;width:2.00px;height:2.00px;background:#920000;"></i>
<i style="left:939.00px;top:187.00px;width:2.00px;height:2.00px;background:#920000;"></i>
<i style="left:947.00px;top:187.00px;width:2.00px;height:2.00px;background:#920000;"></i>
<i style="left:955.00px;top:187.00px;width:2.00px;height:2.00px;background:#920000;"></i>
<i style="left:963.00px;top:187.00px;width:2.00px;height:2.00px;background:#920000;"></i>
<i style="left:972.00px;top:187.00px;width:2.00px;height:2.00px;background:#920000;"></i>
<i style="left:980.00px;top:187.00px;width:2.00px;height:2.00px;background:#920000;"></i>
<i style="left:988.00px;top:187.00px;width:2.00px;height:2.00px;background:#920000;"></i>
<i style="left:996.00px;top:187.00px;width:2.00px;height:2.00px;background:#920000;"></i>
<i style="left:1004.00px;top:187.00px;width:2.00px;height:2.00px;background:#920000;"></i>
<i style="left:1013.00px;top:187.00px;width:2.00px;height:2.00px;background:#920000;"></i>
<i style="left:1021.00px;top:187.00px;width:2.00px;height:2.00px;background:#920000;"></i>
<i style="left:1029.00px;top:187.00px;width:2.00px;height:2.00px;background:#920000;"></i>
<i style="left:1037.00px;top:187.00px;width:2.00px;height:2.00px;background:#920000;"></i>
<i style="left:1046.00px;top:187.00px;width:2.00px;height:2.00px;background:#920000;"></i>
<i style="left:1054.00px;top:187.00px;width:2.00px;height:2.00px;background:#920000;"></i>
<i style="left:1062.00px;top:187.00px;width:2.00px;height:2.00px;background:#920000;"></i>
<i style="left:1070.00px;top:187.00px;width:2.00px;height:2.00px;background:#920000;"></i>
<i style="left:1078.00px;top:187.00px;width:2.00px;height:2.00px;background:#920000;"></i>
<i style="left:1086.00px;top:187.00px;width:2.00px;height:2.00px;background:#920000;"></i>
<i style="left:1095.00px;top:187.00px;width:2.00px;height:2.00px;background:#920000;"></i>
<i style="left:1103.00px;top:187.00px;width:2.00px;height:2.00px;background:#920000;"></i>
<i style="left:1111.00px;top:187.00px;width:2.00px;height:2.00px;background:#920000;"></i>
<i style="left:1119.00px;top:187.00px;width:2.00px;height:2.00px;background:#920000;"></i>
<i style="left:1128.00px;top:187.00px;width:2.00px;height:2.00px;background:#920000;"></i>
<i style="left:1136.00px;top:187.00px;width:2.00px;height:2.00px;background:#920000;"></i>
<i style="left:1144.00px;top:187.00px;width:2.00px;height:2.00px;background:#920000;"></i>
<i style="left:1152.00px;top:187.00px;width:2.00px;height:2.00px;background:#920000;"></i>
<i style="left:1160.00px;top:187.00px;width:2.00px;height:2.00px;background:#920000;"></i>
<i style="left:1168.00px;top:187.00px;width:2.00px;height:2.00px;background:#920000;"></i>
<i style="left:1177.00px;top:187.00px;width:2.00px;height:2.00px;background:#920000;"></i>
<i style="left:1185.00px;top:187.00px;width:2.00px;height:2.00px;background:#920000;"></i>
<i style="left:1193.00px;top:187.00px;width:2.00px;height:2.00px;background:#920000;"></i>
<i style="left:1201.00px;top:187.00px;width:2.00px;height:2.00px;background:#920000;"></i>
<i style="left:1210.00px;top:187.00px;width:2.00px;height:2.00px;background:#920000;"></i>
<i style="left:1218.00px;top:187.00px;width:2.00px;height:2.00px;background:#920000;"></i>
<i style="left:1226.00px;top:187.00px;width:2.00px;height:2.00px;background:#920000;"></i>
<i style="left:1234.00px;top:187.00px;width:2.00px;height:2.00px;background:#920000;"></i>
<i style="left:1242.00px;top:187.00px;width:2.00px;height:2.00px;background:#920000;"></i>
<i style="left:1250.00px;top:187.00px;width:2.00px;height:2.00px;background:#920000;"></i>
<i style="left:767.00px;top:205.00px;width:2.00px;height:2.00px;background:#920000;"></i>
<i style="left:775.00px;top:205.00px;width:2.00px;height:2.00px;background:#920000;"></i>
<i style="left:783.00px;top:196.00px;width:2.00px;height:15.00px;background:#920000;"></i>
<i style="left:791.00px;top:205.00px;width:2.00px;height:2.00px;background:#920000;"></i>
<i style="left:799.00px;top:196.00px;width:2.00px;height:15.00px;background:#920000;"></i>
<i style="left:808.00px;top:205.00px;width:2.00px;height:2.00px;background:#920000;"></i>
<i style="left:816.00px;top:205.00px;width:2.00px;height:2.00px;background:#920000;"></i>
<i style="left:824.00px;top:205.00px;width:2.00px;height:2.00px;background:#920000;"></i>
<i style="left:832.00px;top:205.00px;width:2.00px;height:2.00px;background:#920000;"></i>
<i style="left:840.00px;top:205.00px;width:2.00px;height:2.00px;background:#920000;"></i>
<i style="left:849.00px;top:205.00px;width:2.00px;height:2.00px;background:#920000;"></i>
<i style="left:857.00px;top:205.00px;width:2.00px;height:2.00px;background:#920000;"></i>
<i style="left:865.00px;top:205.00px;width:2.00px;height:2.00px;background:#920000;"></i>
<i style="left:873.00px;top:205.00px;width:2.00px;height:2.00px;background:#920000;"></i>
<i style="left:881.00px;top:205.00px;width:2.00px;height:2.00px;background:#920000;"></i>
<i style="left:890.00px;top:205.00px;width:2.00px;height:2.00px;background:#920000;"></i>
<i style="left:898.00px;top:205.00px;width:2.00px;height:2.00px;background:#920000;"></i>
<i style="left:906.00px;top:196.00px;width:2.00px;height:15.00px;background:#920000;"></i>
<i style="left:914.00px;top:205.00px;width:2.00px;height:2.00px;background:#920000;"></i>
<i style="left:922.00px;top:196.00px;width:2.00px;height:15.00px;background:#920000;"></i>
<i style="left:931.00px;top:205.00px;width:2.00px;height:2.00px;background:#920000;"></i>
<i style="left:939.00px;top:205.00px;width:2.00px;height:2.00px;background:#920000;"></i>
<i style="left:947.00px;top:196.00px;width:2.00px;height:15.00px;background:#920000;"></i>
<i style="left:955.00px;top:196.00px;width:2.00px;height:15.00px;background:#920000;"></i>
<i style="left:963.00px;top:205.00px;width:2.00px;height:2.00px;background:#920000;"></i>
<i style="left:972.00px;top:205.00px;width:2.00px;height:2.00px;background:#920000;"></i>
<i style="left:980.00px;top:196.00px;width:2.00px;height:15.00px;background:#920000;"></i>
<i style="left:988.00px;top:205.00px;width:2.00px;height:2.00px;background:#920000;"></i>
<i style="left:996.00px;top:205.00px;width:2.00px;height:2.00px;background:#920000;"></i>
<i style="left:1004.00px;top:205.00px;width:2.00px;height:2.00px;background:#920000;"></i>
<i style="left:1013.00px;top:205.00px;width:2.00px;height:2.00px;background:#920000;"></i>
<i style="left:1021.00px;top:205.00px;width:2.00px;height:2.00px;background:#920000;"></i>
<i style="left:1029.00px;top:205.00px;width:2.00px;height:2.00px;background:#920000;"></i>
<i style="left:1037.00px;top:205.00px;width:2.00px;height:2.00px;background:#920000;"></i>
<i style="left:1046.00px;top:205.00px;width:2.00px;height:2.00px;background:#920000;"></i>
<i style="left:1054.00px;top:205.00px;width:2.00px;height:2.00px;background:#920000;"></i>
<i style="left:1062.00px;top:205.00px;width:2.00px;height:2.00px;background:#920000;"></i>
<i style="left:1070.00px;top:205.00px;width:2.00px;height:2.00px;background:#920000;"></i>
<i style="left:1078.00px;top:205.00px;width:2.00px;height:2.00px;background:#920000;"></i>
<i style="left:1086.00px;top:205.00px;width:2.00px;height:2.00px;background:#920000;"></i>
<i style="left:1095.00px;top:205.00px;width:2.00px;height:2.00px;background:#920000;"></i>
<i style="left:1103.00px;top:205.00px;width:2.00px;height:2.00px;background:#920000;"></i>
<i style="left:1111.00px;top:205.00px;width:2.00px;height:2.00px;background:#920000;"></i>
<i style="left:1119.00px;top:205.00px;width:2.00px;height:2.00px;background:#920000;"></i>
<i style="left:1128.00px;top:205.00px;width:2.00px;height:2.00px;background:#920000;"></i>
<i style="left:1136.00px;top:205.00px;width:2.00px;height:2.00px;background:#920000;"></i>
<i style="left:1144.00px;top:205.00px;width:2.00px;height:2.00px;background:#920000;"></i>
<i style="left:1152.00px;top:205.00px;width:2.00px;height:2.00px;background:#920000;"></i>
<i style="left:1160.00px;top:205.00px;width:2.00px;height:2.00px;background:#920000;"></i>
<i style="left:1168.00px;top:205.00px;width:2.00px;height:2.00px;background:#920000;"></i>
<i style="left:1177.00px;top:205.00px;width:2.00px;height:2.00px;background:#920000;"></i>
<i style="left:1185.00px;top:205.00px;width:2.00px;height:2.00px;background:#920000;"></i>
<i style="left:1193.00px;top:205.00px;width:2.00px;height:2.00px;background:#920000;"></i>
<i style="left:1201.00px;top:205.00px;width:2.00px;height:2.00px;background:#920000;"></i>
<i style="left:1210.00px;top:205.00px;width:2.00px;height:2.00px;background:#920000;"></i>
<i style="left:1218.00px;top:205.00px;width:2.00px;height:2.00px;background:#920000;"></i>
<i style="left:1226.00px;top:205.00px;width:2.00px;height:2.00px;background:#920000;"></i>
<i style="left:1234.00px;top:205.00px;width:2.00px;height:2.00px;background:#920000;"></i>
<i style="left:1242.00px;top:205.00px;width:2.00px;height:2.00px;background:#920000;"></i>
<i style="left:1250.00px;top:205.00px;width:2.00px;height:2.00px;background:#920000;"></i>
<i style="left:767.00px;top:222.00px;width:2.00px;height:2.00px;background:#920000;"></i>
<i style="left:775.00px;top:213.00px;width:2.00px;height:15.00px;background:#920000;"></i>
<i style="left:783.00px;top:213.00px;width:2.00px;height:15.00px;background:#920000;"></i>
<i style="left:791.00px;top:222.00px;width:2.00px;height:2.00px;background:#920000;"></i>
<i style="left:799.00px;top:213.00px;width:2.00px;height:15.00px;background:#920000;"></i>
<i style="left:808.00px;top:222.00px;width:2.00px;height:2.00px;background:#920000;"></i>
<i style="left:816.00px;top:222.00px;width:2.00px;height:2.00px;background:#920000;"></i>
<i style="left:824.00px;top:222.00px;width:2.00px;height:2.00px;background:#920000;"></i>
<i style="left:832.00px;top:222.00px;width:2.00px;height:2.00px;background:#920000;"></i>
<i style="left:840.00px;top:222.00px;width:2.00px;height:2.00px;background:#920000;"></i>
<i style="left:849.00px;top:222.00px;width:2.00px;height:2.00px;background:#920000;"></i>
<i style="left:857.00px;top:222.00px;width:2.00px;height:2.00px;background:#920000;"></i>
<i style="left:865.00px;top:222.00px;width:2.00px;height:2.00px;background:#920000;"></i>
<i style="left:873.00px;top:222.00px;width:2.00px;height:2.00px;background:#920000;"></i>
<i style="left:881.00px;top:213.00px;width:2.00px;height:15.00px;background:#920000;"></i>
<i style="left:890.00px;top:222.00px;width:2.00px;height:2.00px;background:#920000;"></i>
<i style="left:898.00px;top:222.00px;width:2.00px;height:2.00px;background:#920000;"></i>
<i style="left:906.00px;top:213.00px;width:2.00px;height:15.00px;background:#920000;"></i>
<i style="left:914.00px;top:222.00px;width:2.00px;height:2.00px;background:#920000;"></i>
<i style="left:922.00px;top:213.00px;width:2.00px;height:15.00px;background:#920000;"></i>
<i style="left:931.00px;top:222.00px;width:2.00px;height:2.00px;background:#920000;"></i>
<i style="left:939.00px;top:222.00px;width:2.00px;height:2.00px;background:#920000;"></i>
<i style="left:947.00px;top:213.00px;width:2.00px;height:15.00px;background:#920000;"></i>
<i style="left:955.00px;top:213.00px;width:2.00px;height:15.00px;background:#920000;"></i>
<i style="left:963.00px;top:222.00px;width:2.00px;height:2.00px;background:#920000;"></i>
<i style="left:972.00px;top:213.00px;width:2.00px;height:15.00px;background:#920000;"></i>
<i style="left:980.00px;top:213.00px;width:2.00px;height:15.00px;background:#920000;"></i>
<i style="left:988.00px;top:222.00px;width:2.00px;height:2.00px;background:#920000;"></i>
<i style="left:996.00px;top:222.00px;width:2.00px;height:2.00px;background:#920000;"></i>
<i style="left:1004.00px;top:222.00px;width:2.00px;height:2.00px;background:#920000;"></i>
<i style="left:1013.00px;top:222.00px;width:2.00px;height:2.00px;background:#920000;"></i>
<i style="left:1021.00px;top:222.00px;width:2.00px;height:2.00px;background:#920000;"></i>
<i style="left:1029.00px;top:222.00px;width:2.00px;height:2.00px;background:#920000;"></i>
<i style="left:1037.00px;top:222.00px;width:2.00px;height:2.00px;background:#920000;"></i>
<i style="left:1046.00px;top:222.00px;width:2.00px;height:2.00px;background:#920000;"></i>
<i style="left:1054.00px;top:222.00px;width:2.00px;height:2.00px;background:#920000;"></i>
<i style="left:1062.00px;top:222.00px;width:2.00px;height:2.00px;background:#920000;"></i>
<i style="left:1070.00px;top:222.00px;width:2.00px;height:2.00px;background:#920000;"></i>
<i style="left:1078.00px;top:222.00px;width:2.00px;height:2.00px;background:#920000;"></i>
<i style="left:1086.00px;top:222.00px;width:2.00px;height:2.00px;background:#920000;"></i>
<i style="left:1095.00px;top:222.00px;width:2.00px;height:2.00px;background:#920000;"></i>
<i style="left:1103.00px;top:222.00px;width:2.00px;height:2.00px;background:#920000;"></i>
<i style="left:1111.00px;top:222.00px;width:2.00px;height:2.00px;background:#920000;"></i>
<i style="left:1119.00px;top:222.00px;width:2.00px;height:2.00px;background:#920000;"></i>
<i style="left:1128.00px;top:222.00px;width:2.00px;height:2.00px;background:#920000;"></i>
<i style="left:1136.00px;top:222.00px;width:2.00px;height:2.00px;background:#920000;"></i>
<i style="left:1144.00px;top:222.00px;width:2.00px;height:2.00px;background:#920000;"></i>
<i style="left:1152.00px;top:222.00px;width:2.00px;height:2.00px;background:#920000;"></i>
<i style="left:1160.00px;top:222.00px;width:2.00px;height:2.00px;background:#920000;"></i>
<i style="left:1168.00px;top:222.00px;width:2.00px;height:2.00px;background:#920000;"></i>
<i style="left:1177.00px;top:222.00px;width:2.00px;height:2.00px;background:#920000;"></i>
<i style="left:1185.00px;top:222.00px;width:2.00px;height:2.00px;background:#920000;"></i>
<i style="left:1193.00px;top:222.00px;width:2.00px;height:2.00px;background:#920000;"></i>
<i style="left:1201.00px;top:222.00px;width:2.00px;height:2.00px;background:#920000;"></i>
<i style="left:1210.00px;top:222.00px;width:2.00px;height:2.00px;background:#920000;"></i>
<i style="left:1218.00px;top:222.00px;width:2.00px;height:2.00px;background:#920000;"></i>
<i style="left:1226.00px;top:222.00px;width:2.00px;height:2.00px;background:#920000;"></i>
<i style="left:1234.00px;top:222.00px;width:2.00px;height:2.00px;background:#920000;"></i>
<i style="left:1242.00px;top:222.00px;width:2.00px;height:2.00px;background:#920000;"></i>
<i style="left:1250.00px;top:222.00px;width:2.00px;height:2.00px;background:#920000;"></i>
<i style="left:767.00px;top:240.00px;width:2.00px;height:2.00px;background:#920000;"></i>
<i style="left:775.00px;top:230.00px;width:2.00px;height:15.00px;background:#920000;"></i>
<i style="left:783.00px;top:230.00px;width:2.00px;height:15.00px;background:#920000;"></i>
<i style="left:791.00px;top:230.00px;width:2.00px;height:15.00px;background:#920000;"></i>
<i style="left:799.00px;top:230.00px;width:2.00px;height:15.00px;background:#920000;"></i>
<i style="left:808.00px;top:230.00px;width:2.00px;height:15.00px;background:#920000;"></i>
<i style="left:816.00px;top:230.00px;width:2.00px;height:15.00px;background:#920000;"></i>
<i style="left:824.00px;top:240.00px;width:2.00px;height:2.00px;background:#920000;"></i>
<i style="left:832.00px;top:230.00px;width:2.00px;height:15.00px;background:#920000;"></i>
<i style="left:840.00px;top:240.00px;width:2.00px;height:2.00px;background:#920000;"></i>
<i style="left:849.00px;top:240.00px;width:2.00px;height:2.00px;background:#920000;"></i>
<i style="left:857.00px;top:230.00px;width:2.00px;height:15.00px;background:#920000;"></i>
<i style="left:865.00px;top:230.00px;width:2.00px;height:15.00px;background:#920000;"></i>
<i style="left:873.00px;top:240.00px;width:2.00px;height:2.00px;background:#920000;"></i>
<i style="left:881.00px;top:230.00px;width:2.00px;height:15.00px;background:#920000;"></i>
<i style="left:890.00px;top:240.00px;width:2.00px;height:2.00px;background:#920000;"></i>
<i style="left:898.00px;top:240.00px;width:2.00px;height:2.00px;background:#920000;"></i>
<i style="left:906.00px;top:230.00px;width:2.00px;height:15.00px;background:#920000;"></i>
<i style="left:914.00px;top:230.00px;width:2.00px;height:15.00px;background:#920000;"></i>
<i style="left:922.00px;top:230.00px;width:2.00px;height:15.00px;background:#920000;"></i>
<i style="left:931.00px;top:240.00px;width:2.00px;height:2.00px;background:#920000;"></i>
<i style="left:939.00px;top:230.00px;width:2.00px;height:15.00px;background:#920000;"></i>
<i style="left:947.00px;top:230.00px;width:2.00px;height:15.00px;background:#920000;"></i>
<i style="left:955.00px;top:230.00px;width:2.00px;height:15.00px;background:#920000;"></i>
<i style="left:963.00px;top:230.00px;width:2.00px;height:15.00px;background:#920000;"></i>
<i style="left:972.00px;top:230.00px;width:2.00px;height:15.00px;background:#920000;"></i>
<i style="left:980.00px;top:230.00px;width:2.00px;height:15.00px;background:#920000;"></i>
<i style="left:988.00px;top:240.00px;width:2.00px;height:2.00px;background:#920000;"></i>
<i style="left:996.00px;top:230.00px;width:2.00px;height:15.00px;background:#920000;"></i>
<i style="left:1004.00px;top:240.00px;width:2.00px;height:2.00px;background:#920000;"></i>
<i style="left:1013.00px;top:240.00px;width:2.00px;height:2.00px;background:#920000;"></i>
<i style="left:1021.00px;top:240.00px;width:2.00px;height:2.00px;background:#920000;"></i>
<i style="left:1029.00px;top:240.00px;width:2.00px;height:2.00px;background:#920000;"></i>
<i style="left:1037.00px;top:240.00px;width:2.00px;height:2.00px;background:#920000;"></i>
<i style="left:1046.00px;top:240.00px;width:2.00px;height:2.00px;background:#920000;"></i>
<i style="left:1054.00px;top:240.00px;width:2.00px;height:2.00px;background:#920000;"></i>
<i style="left:1062.00px;top:240.00px;width:2.00px;height:2.00px;background:#920000;"></i>
<i style="left:1070.00px;top:240.00px;width:2.00px;height:2.00px;background:#920000;"></i>
<i style="left:1078.00px;top:240.00px;width:2.00px;height:2.00px;background:#920000;"></i>
<i style="left:1086.00px;top:240.00px;width:2.00px;height:2.00px;background:#920000;"></i>
<i style="left:1095.00px;top:240.00px;width:2.00px;height:2.00px;background:#920000;"></i>
<i style="left:1103.00px;top:240.00px;width:2.00px;height:2.00px;background:#920000;"></i>
<i style="left:1111.00px;top:240.00px;width:2.00px;height:2.00px;background:#920000;"></i>
<i style="left:1119.00px;top:240.00px;width:2.00px;height:2.00px;background:#920000;"></i>
<i style="left:1128.00px;top:240.00px;width:2.00px;height:2.00px;background:#920000;"></i>
<i style="left:1136.00px;top:240.00px;width:2.00px;height:2.00px;background:#920000;"></i>
<i style="left:1144.00px;top:240.00px;width:2.00px;height:2.00px;background:#920000;"></i>
<i style="left:1152.00px;top:240.00px;width:2.00px;height:2.00px;background:#920000;"></i>
<i style="left:1160.00px;top:240.00px;width:2.00px;height:2.00px;background:#920000;"></i>
<i style="left:1168.00px;top:240.00px;width:2.00px;height:2.00px;background:#920000;"></i>
<i style="left:1177.00px;top:240.00px;width:2.00px;height:2.00px;background:#920000;"></i>
<i style="left:1185.00px;top:240.00px;width:2.00px;height:2.00px;background:#920000;"></i>
<i style="left:1193.00px;top:240.00px;width:2.00px;height:2.00px;background:#920000;"></i>
<i style="left:1201.00px;top:240.00px;width:2.00px;height:2.00px;background:#920000;"></i>
<i style="left:1210.00px;top:240.00px;width:2.00px;height:2.00px;background:#920000;"></i>
<i style="left:1218.00px;top:240.00px;width:2.00px;height:2.00px;background:#920000;"></i>
<i style="left:1226.00px;top:240.00px;width:2.00px;height:2.00px;background:#920000;"></i>
<i style="left:1234.00px;top:240.00px;width:2.00px;height:2.00px;background:#920000;"></i>
<i style="left:1242.00px;top:240.00px;width:2.00px;height:2.00px;background:#920000;"></i>
<i style="left:1250.00px;top:240.00px;width:2.00px;height:2.00px;background:#920000;"></i>
<i style="left:767.00px;top:248.00px;width:2.00px;height:15.00px;background:#920000;"></i>
<i style="left:775.00px;top:248.00px;width:2.00px;height:15.00px;background:#920000;"></i>
<i style="left:783.00px;top:248.00px;width:2.00px;height:15.00px;background:#920000;"></i>
<i style="left:791.00px;top:248.00px;width:2.00px;height:15.00px;background:#920000;"></i>
<i style="left:799.00px;top:248.00px;width:2.00px;height:15.00px;background:#920000;"></i>
<i style="left:808.00px;top:248.00px;width:2.00px;height:15.00px;background:#920000;"></i>
<i style="left:816.00px;top:248.00px;width:2.00px;height:15.00px;background:#920000;"></i>
<i style="left:824.00px;top:248.00px;width:2.00px;height:15.00px;background:#920000;"></i>
<i style="left:832.00px;top:248.00px;width:2.00px;height:15.00px;background:#920000;"></i>
<i style="left:840.00px;top:248.00px;width:2.00px;height:15.00px;background:#920000;"></i>
<i style="left:849.00px;top:248.00px;width:2.00px;height:15.00px;background:#920000;"></i>
<i style="left:857.00px;top:248.00px;width:2.00px;height:15.00px;background:#920000;"></i>
<i style="left:865.00px;top:248.00px;width:2.00px;height:15.00px;background:#920000;"></i>
<i style="left:873.00px;top:248.00px;width:2.00px;height:15.00px;background:#920000;"></i>
<i style="left:881.00px;top:248.00px;width:2.00px;height:15.00px;background:#920000;"></i>
<i style="left:890.00px;top:248.00px;width:2.00px;height:15.00px;background:#920000;"></i>
<i style="left:898.00px;top:248.00px;width:2.00px;height:15.00px;background:#920000;"></i>
<i style="left:906.00px;top:248.00px;width:2.00px;height:15.00px;background:#920000;"></i>
<i style="left:914.00px;top:248.00px;width:2.00px;height:15.00px;background:#920000;"></i>
<i style="left:922.00px;top:248.00px;width:2.00px;height:15.00px;background:#920000;"></i>
<i style="left:931.00px;top:248.00px;width:2.00px;height:15.00px;background:#920000;"></i>
<i style="left:939.00px;top:248.00px;width:2.00px;height:15.00px;background:#920000;"></i>
<i style="left:947.00px;top:248.00px;width:2.00px;height:15.00px;background:#920000;"></i>
<i style="left:955.00px;top:248.00px;width:2.00px;height:15.00px;background:#920000;"></i>
<i style="left:963.00px;top:248.00px;width:2.00px;height:15.00px;background:#920000;"></i>
<i style="left:972.00px;top:248.00px;width:2.00px;height:15.00px;background:#920000;"></i>
<i style="left:980.00px;top:248.00px;width:2.00px;height:15.00px;background:#920000;"></i>
<i style="left:988.00px;top:248.00px;width:2.00px;height:15.00px;background:#920000;"></i>
<i style="left:996.00px;top:248.00px;width:2.00px;height:15.00px;background:#920000;"></i>
<i style="left:1004.00px;top:257.00px;width:2.00px;height:2.00px;background:#920000;"></i>
<i style="left:1013.00px;top:257.00px;width:2.00px;height:2.00px;background:#920000;"></i>
<i style="left:1021.00px;top:257.00px;width:2.00px;height:2.00px;background:#920000;"></i>
<i style="left:1029.00px;top:257.00px;width:2.00px;height:2.00px;background:#920000;"></i>
<i style="left:1037.00px;top:257.00px;width:2.00px;height:2.00px;background:#920000;"></i>
<i style="left:1046.00px;top:257.00px;width:2.00px;height:2.00px;background:#920000;"></i>
<i style="left:1054.00px;top:257.00px;width:2.00px;height:2.00px;background:#920000;"></i>
<i style="left:1062.00px;top:257.00px;width:2.00px;height:2.00px;background:#920000;"></i>
<i style="left:1070.00px;top:257.00px;width:2.00px;height:2.00px;background:#920000;"></i>
<i style="left:1078.00px;top:257.00px;width:2.00px;height:2.00px;background:#920000;"></i>
<i style="left:1086.00px;top:257.00px;width:2.00px;height:2.00px;background:#920000;"></i>
<i style="left:1095.00px;top:257.00px;width:2.00px;height:2.00px;background:#920000;"></i>
<i style="left:1103.00px;top:257.00px;width:2.00px;height:2.00px;background:#920000;"></i>
<i style="left:1111.00px;top:257.00px;width:2.00px;height:2.00px;background:#920000;"></i>
<i style="left:1119.00px;top:257.00px;width:2.00px;height:2.00px;background:#920000;"></i>
<i style="left:1128.00px;top:257.00px;width:2.00px;height:2.00px;background:#920000;"></i>
<i style="left:1136.00px;top:257.00px;width:2.00px;height:2.00px;background:#920000;"></i>
<i style="left:1144.00px;top:257.00px;width:2.00px;height:2.00px;background:#920000;"></i>
<i style="left:1152.00px;top:257.00px;width:2.00px;height:2.00px;background:#920000;"></i>
<i style="left:1160.00px;top:257.00px;width:2.00px;height:2.00px;background:#920000;"></i>
<i style="left:1168.00px;top:257.00px;width:2.00px;height:2.00px;background:#920000;"></i>
<i style="left:1177.00px;top:257.00px;width:2.00px;height:2.00px;background:#920000;"></i>
<i style="left:1185.00px;top:257.00px;width:2.00px;height:2.00px;background:#920000;"></i>
<i style="left:1193.00px;top:257.00px;width:2.00px;height:2.00px;background:#920000;"></i>
<i style="left:1201.00px;top:257.00px;width:2.00px;height:2.00px;background:#920000;"></i>
<i style="left:1210.00px;top:257.00px;width:2.00px;height:2.00px;background:#920000;"></i>
<i style="left:1218.00px;top:257.00px;width:2.00px;height:2.00px;background:#920000;"></i>
<i style="left:1226.00px;top:257.00px;width:2.00px;height:2.00px;background:#920000;"></i>
<i style="left:1234.00px;top:257.00px;width:2.00px;height:2.00px;background:#920000;"></i>
<i style="left:1242.00px;top:257.00px;width:2.00px;height:2.00px;background:#920000;"></i>
<i style="left:1250.00px;top:257.00px;width:2.00px;height:2.00px;background:#920000;"></i>
<i style="left:767.00px;top:265.00px;width:2.00px;height:15.00px;background:#920000;"></i>
<i style="left:775.00px;top:265.00px;width:2.00px;height:15.00px;background:#920000;"></i>
<i style="left:783.00px;top:265.00px;width:2.00px;height:15.00px;background:#920000;"></i>
<i style="left:791.00px;top:265.00px;width:2.00px;height:15.00px;background:#920000;"></i>
<i style="left:799.00px;top:265.00px;width:2.00px;height:15.00px;background:#920000;"></i>
<i style="left:808.00px;top:265.00px;width:2.00px;height:15.00px;background:#920000;"></i>
<i style="left:816.00px;top:265.00px;width:2.00px;height:15.00px;background:#920000;"></i>
<i style="left:824.00px;top:265.00px;width:2.00px;height:15.00px;background:#920000;"></i>
<i style="left:832.00px;top:265.00px;width:2.00px;height:15.00px;background:#920000;"></i>
<i style="left:840.00px;top:265.00px;width:2.00px;height:15.00px;background:#920000;"></i>
<i style="left:849.00px;top:265.00px;width:2.00px;height:15.00px;background:#920000;"></i>
<i style="left:857.00px;top:265.00px;width:2.00px;height:15.00px;background:#920000;"></i>
<i style="left:865.00px;top:265.00px;width:2.00px;height:15.00px;background:#920000;"></i>
<i style="left:873.00px;top:265.00px;width:2.00px;height:15.00px;background:#920000;"></i>
<i style="left:881.00px;top:265.00px;width:2.00px;height:15.00px;background:#920000;"></i>
<i style="left:890.00px;top:265.00px;width:2.00px;height:15.00px;background:#920000;"></i>
<i style="left:898.00px;top:265.00px;width:2.00px;height:15.00px;background:#920000;"></i>
<i style="left:906.00px;top:265.00px;width:2.00px;height:15.00px;background:#920000;"></i>
<i style="left:914.00px;top:265.00px;width:2.00px;height:15.00px;background:#920000;"></i>
<i style="left:922.00px;top:265.00px;width:2.00px;height:15.00px;background:#920000;"></i>
<i style="left:931.00px;top:265.00px;width:2.00px;height:15.00px;background:#920000;"></i>
<i style="left:939.00px;top:265.00px;width:2.00px;height:15.00px;background:#920000;"></i>
<i style="left:947.00px;top:265.00px;width:2.00px;height:15.00px;background:#920000;"></i>
<i style="left:955.00px;top:265.00px;width:2.00px;height:15.00px;background:#920000;"></i>
<i style="left:963.00px;top:265.00px;width:2.00px;height:15.00px;background:#920000;"></i>
<i style="left:972.00px;top:265.00px;width:2.00px;height:15.00px;background:#920000;"></i>
<i style="left:980.00px;top:265.00px;width:2.00px;height:15.00px;background:#920000;"></i>
<i style="left:988.00px;top:265.00px;width:2.00px;height:15.00px;background:#920000;"></i>
<i style="left:996.00px;top:265.00px;width:2.00px;height:15.00px;background:#920000;"></i>
<i style="left:1004.00px;top:274.00px;width:2.00px;height:2.00px;background:#920000;"></i>
<i style="left:1013.00px;top:274.00px;width:2.00px;height:2.00px;background:#920000;"></i>
<i style="left:1021.00px;top:274.00px;width:2.00px;height:2.00px;background:#920000;"></i>
<i style="left:1029.00px;top:274.00px;width:2.00px;height:2.00px;background:#920000;"></i>
<i style="left:1037.00px;top:274.00px;width:2.00px;height:2.00px;background:#920000;"></i>
<i style="left:1046.00px;top:274.00px;width:2.00px;height:2.00px;background:#920000;"></i>
<i style="left:1054.00px;top:274.00px;width:2.00px;height:2.00px;background:#920000;"></i>
<i style="left:1062.00px;top:274.00px;width:2.00px;height:2.00px;background:#920000;"></i>
<i style="left:1070.00px;top:274.00px;width:2.00px;height:2.00px;background:#920000;"></i>
<i style="left:1078.00px;top:274.00px;width:2.00px;height:2.00px;background:#920000;"></i>
<i style="left:1086.00px;top:274.00px;width:2.00px;height:2.00px;background:#920000;"></i>
<i style="left:1095.00px;top:274.00px;width:2.00px;height:2.00px;background:#920000;"></i>
<i style="left:1103.00px;top:274.00px;width:2.00px;height:2.00px;background:#920000;"></i>
<i style="left:1111.00px;top:274.00px;width:2.00px;height:2.00px;background:#920000;"></i>
<i style="left:1119.00px;top:274.00px;width:2.00px;height:2.00px;background:#920000;"></i>
<i style="left:1128.00px;top:274.00px;width:2.00px;height:2.00px;background:#920000;"></i>
<i style="left:1136.00px;top:274.00px;width:2.00px;height:2.00px;background:#920000;"></i>
<i style="left:1144.00px;top:274.00px;width:2.00px;height:2.00px;background:#920000;"></i>
<i style="left:1152.00px;top:274.00px;width:2.00px;height:2.00px;background:#920000;"></i>
<i style="left:1160.00px;top:274.00px;width:2.00px;height:2.00px;background:#920000;"></i>
<i style="left:1168.00px;top:274.00px;width:2.00px;height:2.00px;background:#920000;"></i>
<i style="left:1177.00px;top:274.00px;width:2.00px;height:2.00px;background:#920000;"></i>
<i style="left:1185.00px;top:274.00px;width:2.00px;height:2.00px;background:#920000;"></i>
<i style="left:1193.00px;top:274.00px;width:2.00px;height:2.00px;background:#920000;"></i>
<i style="left:1201.00px;top:274.00px;width:2.00px;height:2.00px;background:#920000;"></i>
<i style="left:1210.00px;top:274.00px;width:2.00px;height:2.00px;background:#920000;"></i>
<i style="left:1218.00px;top:274.00px;width:2.00px;height:2.00px;background:#920000;"></i>
<i style="left:1226.00px;top:274.00px;width:2.00px;height:2.00px;background:#920000;"></i>
<i style="left:1234.00px;top:274.00px;width:2.00px;height:2.00px;background:#920000;"></i>
<i style="left:1242.00px;top:274.00px;width:2.00px;height:2.00px;background:#920000;"></i>
<i style="left:1250.00px;top:274.00px;width:2.00px;height:2.00px;background:#920000;"></i>
<i style="left:1.00px;top:341.00px;width:1385.80px;height:1.00px;background:#c4c7c0;"></i>
<i style="left:325.00px;top:341.69px;width:1.00px;height:304.85px;background:#c4c7c0;"></i>
<i style="left:653.00px;top:341.69px;width:1.00px;height:304.85px;background:#c4c7c0;"></i>
<i style="left:981.00px;top:341.69px;width:1.00px;height:304.85px;background:#c4c7c0;"></i>
<i style="left:1.00px;top:585.00px;width:1385.80px;height:1.00px;background:#c4c7c0;"></i>
<i style="left:6.00px;top:610.00px;width:314.00px;height:20.00px;background:#cc0000;"></i>
<span style="left:9.20px;top:3.40px;">wlp3s0f0</span>
<span style="left:1313.00px;top:3.40px;">bmon 4.0</span>
<span style="left:9.20px;top:647.94px;">Thu Apr 16 11:45:47 2020</span>
<span style="left:1247.40px;top:647.94px;">Press ? for help</span>
<span style="left:1.00px;top:20.82px;color:#fce94f;font-weight:bold;">Interfaces</span>
<span style="left:271.60px;top:20.82px;color:#fce94f;font-weight:bold;">RX bps</span>
<span style="left:378.20px;top:20.82px;color:#fce94f;font-weight:bold;">pps</span>
<span style="left:443.80px;top:20.82px;color:#fce94f;font-weight:bold;">%</span>
<span style="left:468.40px;top:20.82px;color:#fce94f;font-weight:bold;">TX bps</span>
<span style="left:575.00px;top:20.82px;color:#fce94f;font-weight:bold;">pps</span>
<span style="left:640.60px;top:20.82px;color:#fce94f;font-weight:bold;">%</span>
<span style="left:17.40px;top:38.24px;">lo</span>
<span style="left:312.60px;top:38.24px;">0</span>
<span style="left:394.60px;top:38.24px;">0</span>
<span style="left:509.40px;top:38.24px;">0</span>
<span style="left:591.40px;top:38.24px;">0</span>
<span style="left:33.80px;top:55.66px;">qdisc none (noqueue)</span>
<span style="left:312.60px;top:55.66px;">0</span>
<span style="left:394.60px;top:55.66px;">0</span>
<span style="left:509.40px;top:55.66px;">0</span>
<span style="left:591.40px;top:55.66px;">0</span>
<span style="left:17.40px;top:73.08px;">enp4s0f2</span>
<span style="left:312.60px;top:73.08px;">0</span>
<span style="left:394.60px;top:73.08px;">0</span>
<span style="left:509.40px;top:73.08px;">0</span>
<span style="left:591.40px;top:73.08px;">0</span>
<span style="left:33.80px;top:90.50px;">qdisc none (fq_codel)</span>
<span style="left:312.60px;top:90.50px;">0</span>
<span style="left:394.60px;top:90.50px;">0</span>
<span style="left:509.40px;top:90.50px;">0</span>
<span style="left:591.40px;top:90.50px;">0</span>
<span style="left:17.40px;top:107.92px;">wlp3s0f0</span>
<span style="left:279.80px;top:107.92px;">12.14KiB</span>
<span style="left:386.40px;top:107.92px;">15</span>
<span style="left:493.00px;top:107.92px;">890B</span>
<span style="left:583.20px;top:107.92px;">10</span>
<span style="left:33.80px;top:125.34px;">qdisc none (noqueue)</span>
<span style="left:312.60px;top:125.34px;">0</span>
<span style="left:394.60px;top:125.34px;">0</span>
<span style="left:509.40px;top:125.34px;">0</span>
<span style="left:591.40px;top:125.34px;">0</span>
<span style="left:9.20px;top:107.92px;color:#000000;">&gt;</span>
<span style="left:42.00px;top:160.18px;">KiB</span>
<span style="left:247.00px;top:160.18px;">(RX Bytes/second)</span>
<span style="left:25.60px;top:177.60px;">24.87</span>
<span style="left:25.60px;top:195.02px;">20.72</span>
<span style="left:25.60px;top:212.44px;">16.58</span>
<span style="left:25.60px;top:229.86px;">12.43</span>
<span style="left:33.80px;top:247.28px;">8.29</span>
<span style="left:33.80px;top:264.70px;">4.14</span>
<span style="left:74.80px;top:282.12px;">1</span>
<span style="left:107.60px;top:282.12px;">5</span>
<span style="left:140.40px;top:282.12px;">10</span>
<span style="left:181.40px;top:282.12px;">15</span>
<span style="left:222.40px;top:282.12px;">20</span>
<span style="left:263.40px;top:282.12px;">25</span>
<span style="left:304.40px;top:282.12px;">30</span>
<span style="left:345.40px;top:282.12px;">35</span>
<span style="left:386.40px;top:282.12px;">40</span>
<span style="left:427.40px;top:282.12px;">45</span>
<span style="left:468.40px;top:282.12px;">50</span>
<span style="left:509.40px;top:282.12px;">55</span>
<span style="left:550.40px;top:282.12px;">60</span>
<span style="left:730.80px;top:160.18px;">KiB</span>
<span style="left:935.80px;top:160.18px;">(TX Bytes/second)</span>
<span style="left:722.60px;top:177.60px;">1.91</span>
<span style="left:722.60px;top:195.02px;">1.59</span>
<span style="left:722.60px;top:212.44px;">1.27</span>
<span style="left:722.60px;top:229.86px;">0.95</span>
<span style="left:722.60px;top:247.28px;">0.64</span>
<span style="left:722.60px;top:264.70px;">0.32</span>
<span style="left:763.60px;top:282.12px;">1</span>
<span style="left:796.40px;top:282.12px;">5</span>
<span style="left:829.20px;top:282.12px;">10</span>
<span style="left:870.20px;top:282.12px;">15</span>
<span style="left:911.20px;top:282.12px;">20</span>
<span style="left:952.20px;top:282.12px;">25</span>
<span style="left:993.20px;top:282.12px;">30</span>
<span style="left:1034.20px;top:282.12px;">35</span>
<span style="left:1075.20px;top:282.12px;">40</span>
<span style="left:1116.20px;top:282.12px;">45</span>
<span style="left:1157.20px;top:282.12px;">50</span>
<span style="left:1198.20px;top:282.12px;">55</span>
<span style="left:1239.20px;top:282.12px;">60</span>
<span style="left:181.40px;top:351.80px;">RX</span>
<span style="left:279.80px;top:351.80px;">TX</span>
<span style="left:9.20px;top:369.22px;">Bytes</span>
<span style="left:148.60px;top:369.22px;">206.37</span>
<span style="left:197.80px;top:369.22px;">MiB</span>
<span style="left:255.20px;top:369.22px;">10.18</span>
<span style="left:296.20px;top:369.22px;">MiB</span>
<span style="left:9.20px;top:386.64px;">Collisions</span>
<span style="left:189.60px;top:386.64px;">-</span>
<span style="left:288.00px;top:386.64px;">0</span>
<span style="left:9.20px;top:404.06px;">Errors</span>
<span style="left:189.60px;top:404.06px;">0</span>
<span style="left:288.00px;top:404.06px;">0</span>
<span style="left:9.20px;top:421.48px;">ICMPv6</span>
<span style="left:189.60px;top:421.48px;">0</span>
<span style="left:279.80px;top:421.48px;">12</span>
<span style="left:9.20px;top:438.90px;">Ip6 Broadcast</span>
<span style="left:189.60px;top:438.90px;">0</span>
<span style="left:288.00px;top:438.90px;">0</span>
<span style="left:9.20px;top:456.32px;">Ip6 Delivers</span>
<span style="left:181.40px;top:456.32px;">45</span>
<span style="left:288.00px;top:456.32px;">-</span>
<span style="left:9.20px;top:473.74px;">Ip6 Header Err</span>
<span style="left:189.60px;top:473.74px;">0</span>
<span style="left:288.00px;top:473.74px;">-</span>
<span style="left:9.20px;top:491.16px;">Ip6 Non-ECT Pa</span>
<span style="left:181.40px;top:491.16px;">50</span>
<span style="left:288.00px;top:491.16px;">-</span>
<span style="left:9.20px;top:508.58px;">Ip6 Reassembly</span>
<span style="left:189.60px;top:508.58px;">0</span>
<span style="left:288.00px;top:508.58px;">-</span>
<span style="left:9.20px;top:526.00px;">Ip6Discards</span>
<span style="left:189.60px;top:526.00px;">0</span>
<span style="left:288.00px;top:526.00px;">0</span>
<span style="left:9.20px;top:543.42px;">Missed Error</span>
<span style="left:189.60px;top:543.42px;">0</span>
<span style="left:288.00px;top:543.42px;">-</span>
<span style="left:9.20px;top:560.84px;">Window Error</span>
<span style="left:189.60px;top:560.84px;">-</span>
<span style="left:288.00px;top:560.84px;">0</span>
<span style="left:509.40px;top:351.80px;">RX</span>
<span style="left:607.80px;top:351.80px;">TX</span>
<span style="left:337.20px;top:369.22px;">Packets</span>
<span style="left:476.60px;top:369.22px;">182.82</span>
<span style="left:525.80px;top:369.22px;">K</span>
<span style="left:575.00px;top:369.22px;">105.91</span>
<span style="left:624.20px;top:369.22px;">K</span>
<span style="left:337.20px;top:386.64px;">Compressed</span>
<span style="left:517.60px;top:386.64px;">0</span>
<span style="left:616.00px;top:386.64px;">0</span>
<span style="left:337.20px;top:404.06px;">FIFO Error</span>
<span style="left:517.60px;top:404.06px;">0</span>
<span style="left:616.00px;top:404.06px;">0</span>
<span style="left:337.20px;top:421.48px;">ICMPv6 Checksu</span>
<span style="left:517.60px;top:421.48px;">0</span>
<span style="left:616.00px;top:421.48px;">-</span>
<span style="left:337.20px;top:438.90px;">Ip6 Broadcast</span>
<span style="left:517.60px;top:438.90px;">0</span>
<span style="left:616.00px;top:438.90px;">0</span>
<span style="left:337.20px;top:456.32px;">Ip6 ECT(0) Pac</span>
<span style="left:517.60px;top:456.32px;">0</span>
<span style="left:616.00px;top:456.32px;">-</span>
<span style="left:337.20px;top:473.74px;">Ip6 Multicast</span>
<span style="left:493.00px;top:473.74px;">8.65</span>
<span style="left:525.80px;top:473.74px;">KiB</span>
<span style="left:591.40px;top:473.74px;">4.14</span>
<span style="left:624.20px;top:473.74px;">KiB</span>
<span style="left:337.20px;top:491.16px;">Ip6 Reasm/Frag</span>
<span style="left:517.60px;top:491.16px;">0</span>
<span style="left:616.00px;top:491.16px;">0</span>
<span style="left:337.20px;top:508.58px;">Ip6 Too Big Er</span>
<span style="left:517.60px;top:508.58px;">0</span>
<span style="left:616.00px;top:508.58px;">-</span>
<span style="left:337.20px;top:526.00px;">Ip6Octets</span>
<span style="left:493.00px;top:526.00px;">8.65</span>
<span style="left:525.80px;top:526.00px;">KiB</span>
<span style="left:591.40px;top:526.00px;">4.14</span>
<span style="left:624.20px;top:526.00px;">KiB</span>
<span style="left:337.20px;top:543.42px;">Multicast</span>
<span style="left:517.60px;top:543.42px;">-</span>
<span style="left:616.00px;top:543.42px;">0</span>
<span style="left:837.40px;top:351.80px;">RX</span>
<span style="left:935.80px;top:351.80px;">TX</span>
<span style="left:665.20px;top:369.22px;">Abort Error</span>
<span style="left:845.60px;top:369.22px;">-</span>
<span style="left:944.00px;top:369.22px;">0</span>
<span style="left:665.20px;top:386.64px;">CRC Error</span>
<span style="left:845.60px;top:386.64px;">0</span>
<span style="left:944.00px;top:386.64px;">-</span>
<span style="left:665.20px;top:404.06px;">Frame Error</span>
<span style="left:845.60px;top:404.06px;">0</span>
<span style="left:944.00px;top:404.06px;">-</span>
<span style="left:665.20px;top:421.48px;">ICMPv6 Errors</span>
<span style="left:845.60px;top:421.48px;">0</span>
<span style="left:944.00px;top:421.48px;">0</span>
<span style="left:665.20px;top:438.90px;">Ip6 CE Packets</span>
<span style="left:845.60px;top:438.90px;">0</span>
<span style="left:944.00px;top:438.90px;">-</span>
<span style="left:665.20px;top:456.32px;">Ip6 ECT(1) Pac</span>
<span style="left:845.60px;top:456.32px;">0</span>
<span style="left:944.00px;top:456.32px;">-</span>
<span style="left:665.20px;top:473.74px;">Ip6 Multicast</span>
<span style="left:837.40px;top:473.74px;">50</span>
<span style="left:935.80px;top:473.74px;">36</span>
<span style="left:665.20px;top:491.16px;">Ip6 Reasm/Frag</span>
<span style="left:845.60px;top:491.16px;">0</span>
<span style="left:944.00px;top:491.16px;">0</span>
<span style="left:665.20px;top:508.58px;">Ip6 Truncated</span>
<span style="left:845.60px;top:508.58px;">0</span>
<span style="left:944.00px;top:508.58px;">-</span>
<span style="left:665.20px;top:526.00px;">Ip6Pkts</span>
<span style="left:837.40px;top:526.00px;">50</span>
<span style="left:935.80px;top:526.00px;">36</span>
<span style="left:665.20px;top:543.42px;">No Handler</span>
<span style="left:845.60px;top:543.42px;">0</span>
<span style="left:944.00px;top:543.42px;">-</span>
<span style="left:1165.40px;top:351.80px;">RX</span>
<span style="left:1263.80px;top:351.80px;">TX</span>
<span style="left:993.20px;top:369.22px;">Carrier Error</span>
<span style="left:1173.60px;top:369.22px;">-</span>
<span style="left:1272.00px;top:369.22px;">0</span>
<span style="left:993.20px;top:386.64px;">Dropped</span>
<span style="left:1173.60px;top:386.64px;">0</span>
<span style="left:1272.00px;top:386.64px;">0</span>
<span style="left:993.20px;top:404.06px;">Heartbeat Erro</span>
<span style="left:1173.60px;top:404.06px;">-</span>
<span style="left:1272.00px;top:404.06px;">0</span>
<span style="left:993.20px;top:421.48px;">Ip6 Address Er</span>
<span style="left:1173.60px;top:421.48px;">0</span>
<span style="left:1272.00px;top:421.48px;">-</span>
<span style="left:993.20px;top:438.90px;">Ip6 Checksum E</span>
<span style="left:1173.60px;top:438.90px;">0</span>
<span style="left:1272.00px;top:438.90px;">-</span>
<span style="left:993.20px;top:456.32px;">Ip6 Forwarded</span>
<span style="left:1173.60px;top:456.32px;">-</span>
<span style="left:1272.00px;top:456.32px;">0</span>
<span style="left:993.20px;top:473.74px;">Ip6 No Route</span>
<span style="left:1173.60px;top:473.74px;">0</span>
<span style="left:1272.00px;top:473.74px;">0</span>
<span style="left:993.20px;top:491.16px;">Ip6 Reasm/Frag</span>
<span style="left:1173.60px;top:491.16px;">0</span>
<span style="left:1272.00px;top:491.16px;">0</span>
<span style="left:993.20px;top:508.58px;">Ip6 Unknown Pr</span>
<span style="left:1173.60px;top:508.58px;">0</span>
<span style="left:1272.00px;top:508.58px;">-</span>
<span style="left:993.20px;top:526.00px;">Length Error</span>
<span style="left:1173.60px;top:526.00px;">0</span>
<span style="left:1272.00px;top:526.00px;">-</span>
<span style="left:993.20px;top:543.42px;">Over Error</span>
<span style="left:1173.60px;top:543.42px;">0</span>
<span style="left:1272.00px;top:543.42px;">-</span>
<span style="left:9.20px;top:595.68px;">MTU</span>
<span style="left:279.80px;top:595.68px;">1500</span>
<span style="left:9.20px;top:630.52px;">Family</span>
<span style="left:263.40px;top:630.52px;">unspec</span>
<span style="left:337.20px;top:595.68px;">Flags</span>
<span style="left:460.20px;top:595.68px;">broadcast,multicast,up</span>
<span style="left:337.20px;top:613.10px;">Broadcast</span>
<span style="left:501.20px;top:613.10px;">ff:ff:ff:ff:ff:ff</span>
<span style="left:337.20px;top:630.52px;">Alias</span>
<span style="left:665.20px;top:595.68px;">Operstate</span>
<span style="left:952.20px;top:595.68px;">up</span>
<span style="left:665.20px;top:613.10px;">Mode</span>
<span style="left:911.20px;top:613.10px;">dormant</span>
<span style="left:665.20px;top:630.52px;">Qdisc</span>
<span style="left:911.20px;top:630.52px;">noqueue</span>
<span style="left:993.20px;top:595.68px;">IfIndex</span>
<span style="left:1288.40px;top:595.68px;">3</span>
<span style="left:993.20px;top:613.10px;">TXQlen</span>
<span style="left:1263.80px;top:613.10px;">1000</span>
</body></html>
